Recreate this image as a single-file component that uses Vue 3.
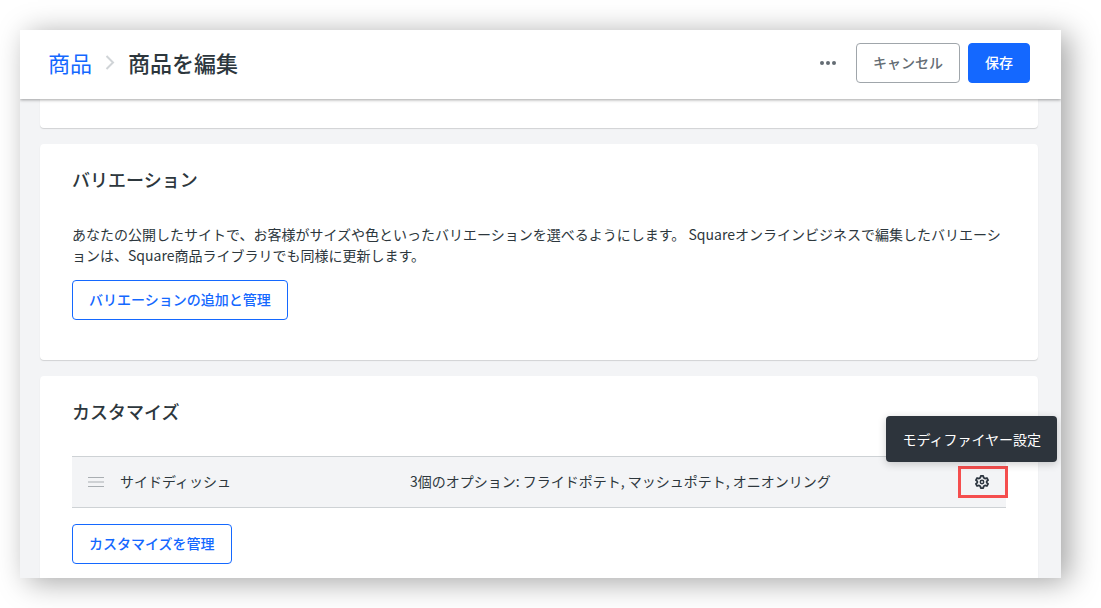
<script setup>
import { ref } from 'vue'

const modifiers = ref([
  { id: 1, name: 'サイドディッシュ', options: ['フライドポテト', 'マッシュポテト', 'オニオンリング'] },
])
</script>

<template>
  <div class="stage">
    <div class="window">
      <header class="topbar">
        <nav class="crumbs" aria-label="パンくず">
          <a href="#" class="crumb-link">商品</a>
          <svg class="chevron" width="10" height="16" viewBox="0 0 10 16" aria-hidden="true">
            <path d="M1.5 2 8 8.500 1.5 15" fill="none" stroke="#d0d4d7" stroke-width="2" />
          </svg>
          <h1>商品を編集</h1>
        </nav>
        <div class="actions">
          <button type="button" class="more" aria-label="その他">
            <svg width="16" height="6" viewBox="0 0 16 6" aria-hidden="true">
              <g fill="#646c73">
                <circle cx="2" cy="3" r="2" />
                <circle cx="8" cy="3" r="2" />
                <circle cx="14" cy="3" r="2" />
              </g>
            </svg>
          </button>
          <button type="button" class="btn neutral">キャンセル</button>
          <button type="button" class="btn primary">保存</button>
        </div>
      </header>

      <main class="content">
        <section class="card tail"></section>

        <section class="card variations">
          <h2>バリエーション</h2>
          <p>あなたの公開したサイトで、お客様がサイズや色といったバリエーションを選べるようにします。 Squareオンラインビジネスで編集したバリエーションは、Square商品ライブラリでも同様に更新します。</p>
          <button type="button" class="btn outline">バリエーションの追加と管理</button>
        </section>

        <section class="card customize">
          <h2>カスタマイズ</h2>
          <ul class="rows">
            <li v-for="m in modifiers" :key="m.id" class="row">
              <svg class="grip" width="16" height="10" viewBox="0 0 16 10" aria-hidden="true">
                <path d="M0 .5h16M0 5h16M0 9.500h16" stroke="#a9aeb2" stroke-width="1" />
              </svg>
              <span class="name">{{ m.name }}</span>
              <span class="options">{{ m.options.length }}個のオプション: {{ m.options.join(', ') }}</span>
              <div class="settings">
                <button type="button" class="gear" aria-describedby="gear-tip" aria-label="設定">
                  <svg width="14" height="14" viewBox="0 0 14 14" aria-hidden="true">
                    <path
                      d="M5.800.9h2.400l.5 1.900 1.300.8 1.900-.6 1.200 2.100L11.700 6.400v1.200l1.400 1.300-1.200 2.100-1.900-.6-1.300.8-.5 1.900H5.800l-.5-1.900L4 10.400l-1.900.6L.9 8.900l1.400-1.300V6.400L.9 5.100 2.100 3l1.900.6 1.300-.8z"
                      fill="none" stroke="#2d3640" stroke-width="1.800" stroke-linejoin="round" />
                    <circle cx="7" cy="7" r="1.700" fill="none" stroke="#2d3640" stroke-width="1.500" />
                  </svg>
                </button>
                <div id="gear-tip" role="tooltip" class="tooltip">モディファイヤー設定</div>
              </div>
            </li>
          </ul>
          <button type="button" class="btn outline">カスタマイズを管理</button>
        </section>
      </main>
    </div>
  </div>
</template>

<style>
body {
  margin: 0;
  background: #fff;
}
</style>

<style scoped>
.stage {
  box-sizing: border-box;
  height: 100vh;
  padding: 30px 40px 30px 20px;
  overflow: hidden;
  font-family: "Noto Sans CJK JP", sans-serif;
  font-size: 14px;
  line-height: 22px;
  color: #2d373d;
}

.window {
  display: flex;
  flex-direction: column;
  height: 100%;
  overflow: hidden;
  background: #f3f4f6;
  box-shadow: 8px 4px 28px rgba(0, 0, 0, 0.36);
}

.topbar {
  position: relative;
  z-index: 1;
  flex: none;
  display: flex;
  align-items: center;
  justify-content: space-between;
  padding: 13px 31px 16px 28px;
  background: #fff;
  box-shadow: 0 1px 3px rgba(0, 0, 0, 0.36);
}

.crumbs {
  display: flex;
  align-items: center;
  padding-bottom: 2px;
  font-size: 22px;
  line-height: 32px;
}

.crumb-link {
  color: #1468ff;
  text-decoration: none;
}

.chevron {
  margin: 0 13px;
}

h1 {
  margin: 0;
  font-size: 22px;
  font-weight: 500;
}

.actions {
  display: flex;
  align-items: center;
  gap: 8px;
}

.btn {
  height: 40px;
  padding: 0 16px 2px;
  border: 1px solid;
  border-radius: 4px;
  background: #fff;
  font: inherit;
  font-weight: 500;
}

.neutral {
  border-color: #a0a6ab;
  color: #646c73;
}

.primary {
  border-color: #1468ff;
  background: #1468ff;
  color: #fff;
}

.outline {
  border-color: #1468ff;
  color: #1468ff;
}

.more {
  display: flex;
  align-items: center;
  justify-content: center;
  width: 40px;
  height: 40px;
  padding: 0;
  border: 0;
  background: none;
}

.content {
  flex: 1;
  display: flex;
  flex-direction: column;
  gap: 16px;
  min-height: 0;
  padding: 0 23px 0 20px;
}

.card {
  flex: none;
  padding: 0 32px;
  border-radius: 4px;
  background: #fff;
  box-shadow: 0 1px 1px rgba(0, 0, 0, 0.14);
}

.tail {
  height: 29px;
  border-radius: 0 0 4px 4px;
}

.variations {
  padding-top: 21px;
  padding-bottom: 40px;
}

.customize {
  padding-top: 21px;
  padding-bottom: 32px;
}

h2 {
  margin: 0;
  font-size: 18px;
  line-height: 28px;
  font-weight: 500;
}

p {
  margin: 31px 0 14px;
  line-height: 21px;
}

.rows {
  margin: 31px 0 16px;
  padding: 0;
  list-style: none;
}

.row {
  display: grid;
  grid-template-columns: 16px 290px 1fr auto;
  align-items: center;
  height: 50px;
  padding-left: 16px;
  border-top: 1px solid #ced2d5;
  border-bottom: 1px solid #ced2d5;
  background: #f3f4f6;
}

.name,
.options {
  padding: 0 0 2px 16px;
}

.settings {
  position: relative;
  margin-right: -2px;
}

.gear {
  display: flex;
  align-items: center;
  justify-content: center;
  width: 50px;
  height: 32px;
  padding: 0 2px 0 0;
  border: 3px solid #f54e4e;
  background: none;
}

.tooltip {
  position: absolute;
  right: -49px;
  bottom: 36px;
  padding: 12px 16px;
  border-radius: 4px;
  background: #2d343c;
  color: #fff;
  white-space: nowrap;
  box-shadow: 0 2px 8px rgba(0, 0, 0, 0.2);
}
</style>
